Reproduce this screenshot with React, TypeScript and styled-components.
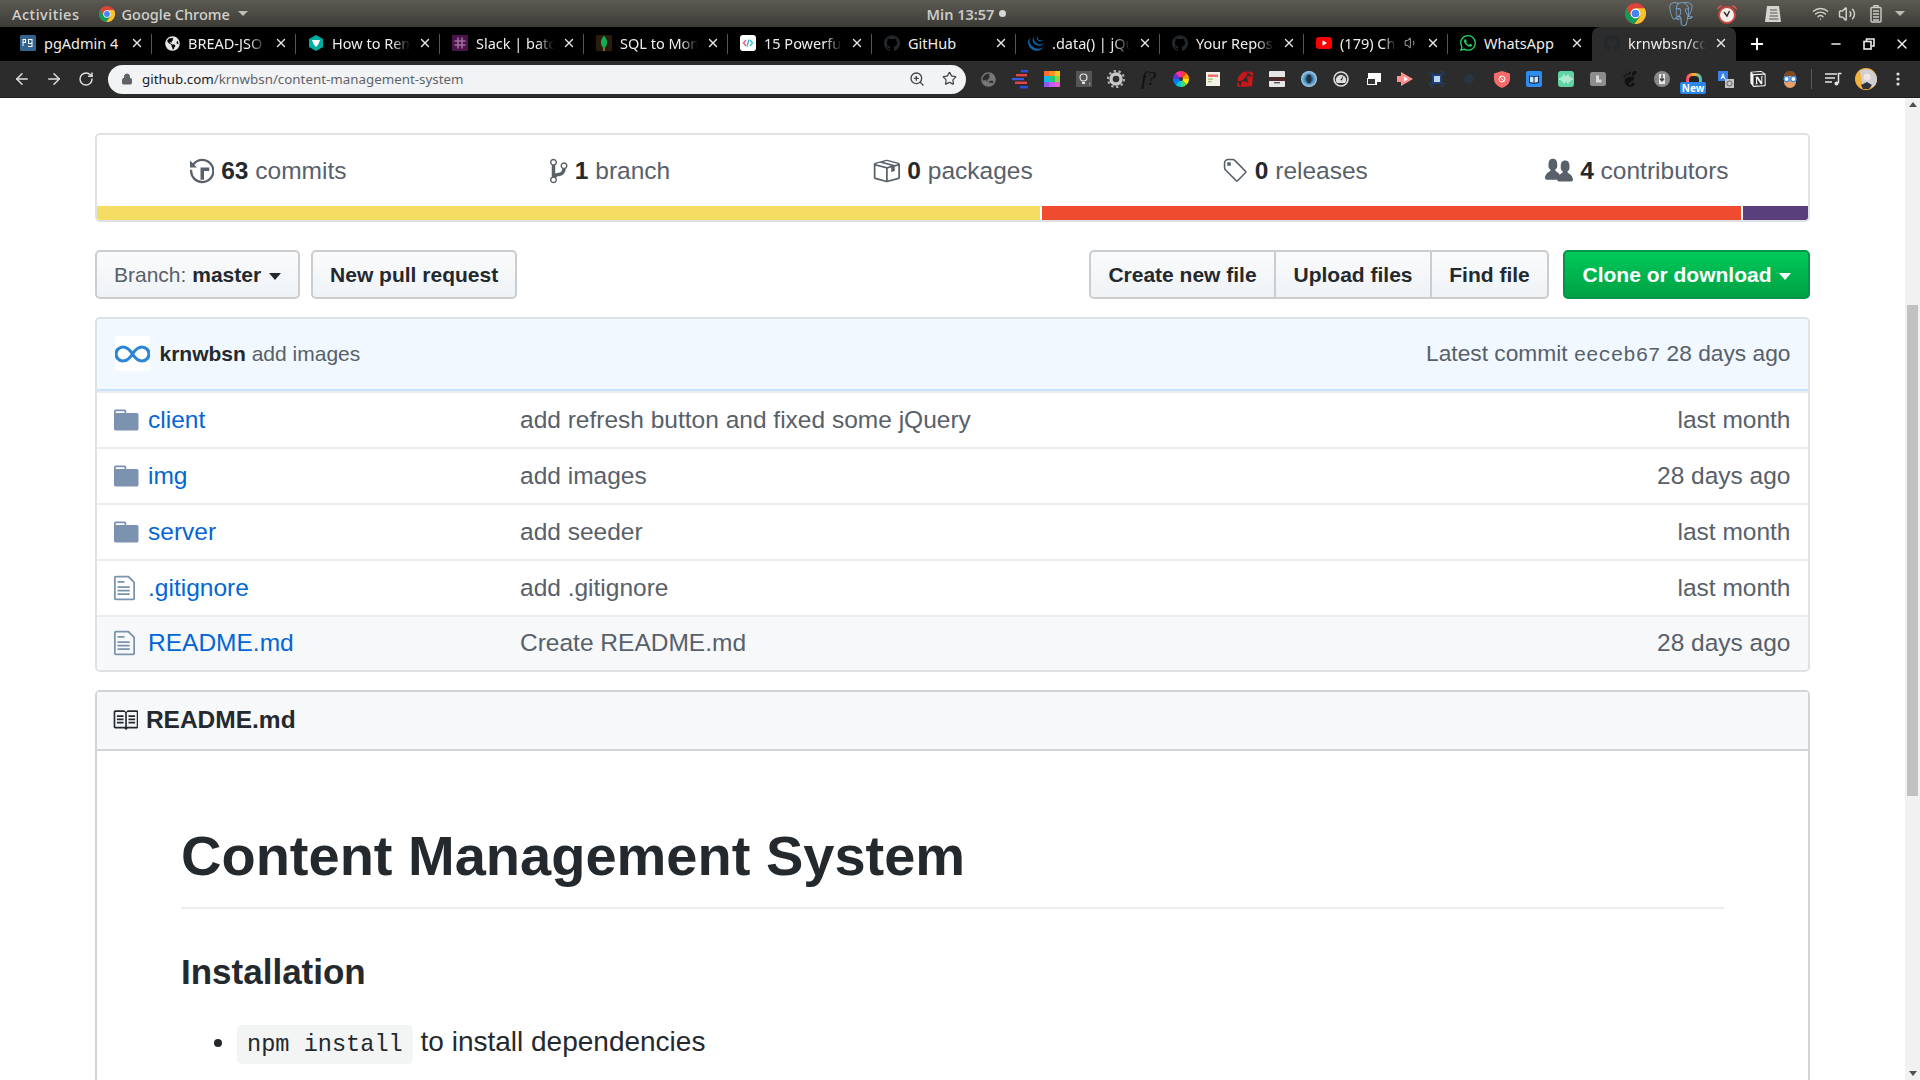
import React from "react";
import styled, { createGlobalStyle } from "styled-components";
import { ArrowLeft, ArrowRight, RotateCw, Lock, ZoomIn, Star, Plus, X, Minus, Wifi, Volume2, Volume1 } from "lucide-react";
import { SiGithub, SiWhatsapp, SiJquery, SiRuby, SiGnome, SiNotion, SiPostgresql } from "react-icons/si";
import { FaGlobeAmericas, FaGlobeAsia } from "react-icons/fa";

const Global = createGlobalStyle`
  html, body { margin: 0; padding: 0; height: 1080px; overflow: hidden; background: #fff; }
  * { box-sizing: border-box; }
`;

const Page = styled.div`
  width: 1920px; height: 1080px; display: flex; flex-direction: column; overflow: hidden;
  font-family: "Liberation Sans", Arial, sans-serif;
`;

/* ---------- GNOME top bar ---------- */
const TopBar = styled.header`
  height: 27px; flex: none; display: grid; grid-template-columns: 1fr auto 1fr; align-items: center;
  background: linear-gradient(#5c5a52, #3c3b37);
  color: #d3d2cd; font: 500 14.5px "Noto Sans", sans-serif; padding: 0 11px 0 12px;
`;
const BarLeft = styled.div`display: flex; align-items: center; gap: 20px;`;
const ActivitiesLabel = styled.span`letter-spacing: 0.5px;`;
const AppMenu = styled.div`display: flex; align-items: center; gap: 6px;`;
const Caret = styled.span<{ $c?: string }>`
  width: 0; height: 0; border-left: 5px solid transparent; border-right: 5px solid transparent;
  border-top: 5px solid ${(p) => p.$c || "#bdbcb7"}; margin-left: 2px;
`;
const Clock = styled.div`display: flex; align-items: center; gap: 5px; font-weight: 600; color: #c9c9c5; margin-left: 12px;`;
const Dot = styled.span`width: 7px; height: 7px; border-radius: 50%; background: #d6d6d2;`;
const BarRight = styled.div`display: flex; align-items: center; justify-content: flex-end;`;
const SystemTray = styled.div`display: flex; align-items: center; margin-left: 13px;`;
const Tray = styled.span<{ $w: number }>`
  width: ${(p) => p.$w}px; display: flex; justify-content: center; align-items: center; color: #cfcfca;
`;

/* ---------- Tab strip ---------- */
const TabStrip = styled.nav`
  height: 34px; flex: none; background: #000; display: flex; padding-left: 8px; color: #eee;
  font: 14.5px "Noto Sans", sans-serif;
`;
const Tab = styled.div<{ $active?: boolean; $sep?: boolean }>`
  position: relative; width: 144px; flex: none; display: flex; align-items: center; padding: 0 8px 2px 12px; gap: 8px;
  border-radius: 8px 8px 0 0;
  background: ${(p) => (p.$active ? "#2c2c2c" : "transparent")};
  &::after {
    content: ""; position: absolute; right: 0; top: 7px; bottom: 7px; width: 1px;
    background: ${(p) => (p.$sep ? "#555" : "transparent")};
  }
`;
const Fav = styled.span`width: 16px; height: 16px; flex: none; display: flex; align-items: center; justify-content: center;`;
const TabTitle = styled.span<{ $fade?: boolean }>`
  flex: 1; min-width: 0; white-space: nowrap;
  ${(p) => (p.$fade ? "-webkit-mask-image: linear-gradient(90deg,#000 78%,transparent 100%); mask-image: linear-gradient(90deg,#000 78%,transparent 100%);" : "")}
`;
const TabClose = styled.span`flex: none; display: flex; color: #e8e8e8;`;
const NewTab = styled.span`width: 42px; display: flex; align-items: center; justify-content: center; color: #fff;`;
const WinControls = styled.div`margin-left: auto; display: flex; align-items: center; padding-right: 2px; color: #eee;`;
const WinBtn = styled.span`width: 33px; display: flex; justify-content: center;`;

/* ---------- Toolbar ---------- */
const Toolbar = styled.div`
  height: 37px; flex: none; background: #2c2c2c; display: flex; align-items: center; padding-left: 6px;
  border-bottom: 1px solid #1f1f1f; color: #dedede;
`;
const NavBtn = styled.span`width: 32px; display: flex; justify-content: center;`;
const Omnibox = styled.div`
  width: 858px; height: 29px; margin-left: 6px; border-radius: 15px; background: #f1f3f4; display: flex; align-items: center;
  padding: 0 1px 1px 13px; color: #5f6368; font: 13.35px "Noto Sans", sans-serif;
`;
const Url = styled.span`margin-left: 9px; flex: 1; white-space: nowrap;`;
const Host = styled.span`color: #202124;`;
const OmniIcon = styled.span`width: 32px; display: flex; justify-content: center; color: #444;`;
const Exts = styled.div`display: flex; align-items: center; margin-left: 6px;`;
const Ext = styled.span`
  position: relative; width: 32.1px; height: 30px; display: flex; align-items: center; justify-content: center;
`;
const FQ = styled.span`font: italic 19px "Liberation Serif", serif; color: #0c0c0c;`;
const NewBadge = styled.span`
  position: absolute; left: 2px; bottom: 0; width: 26px; height: 12px; border-radius: 2px; background: #2b86e6; color: #fff;
  font: 700 10px/12px "Noto Sans", sans-serif; text-align: center;
`;
const ToolDivider = styled.span`width: 1px; height: 20px; background: #5a5a5a; margin: 0 5px;`;

/* ---------- Page ---------- */
const Viewport = styled.div`flex: 1; min-height: 0; display: flex;`;
const Main = styled.main`flex: 1; min-width: 0; overflow: hidden; background: #fff; color: #24292e;`;
const Container = styled.div`width: 1715px; margin: 0 auto; padding-top: 35px;`;

const Summary = styled.section`
  height: 89px; border: 2px solid #dfe2e5; border-radius: 5px; display: flex; flex-direction: column; overflow: hidden;
`;
const Stats = styled.div`flex: 1; display: grid; grid-template-columns: repeat(5, 1fr); align-items: center;`;
const Stat = styled.div`
  display: flex; justify-content: center; align-items: center; gap: 7px; font-size: 24.5px; color: #586069;
  b { color: #24292e; font-weight: 700; }
`;
const LangBar = styled.div`height: 14px; flex: none; display: flex; gap: 2px;`;
const Lang = styled.span<{ $grow: number; $c: string }>`flex: ${(p) => p.$grow} 0 0; background: ${(p) => p.$c};`;

const Actions = styled.div`margin: 28px 0 18px; display: flex; align-items: stretch; height: 49px;`;
const Btn = styled.button`
  height: 49px; padding: 0 17px; border: 2px solid #cbcdcf; border-radius: 5px; font: 700 21px "Liberation Sans", sans-serif;
  color: #24292e; background: linear-gradient(#fafbfc, #eff3f6); display: inline-flex; align-items: center;
`;
const BranchBtn = styled(Btn)`
  font-weight: 400; color: #586069; gap: 6px; margin-right: 11px;
  b { color: #24292e; }
`;
const BtnCaret = styled.span<{ $c: string }>`
  width: 0; height: 0; border-left: 6px solid transparent; border-right: 6px solid transparent; border-top: 7px solid ${(p) => p.$c}; margin-left: 2px; margin-top: 3px;
`;
const Spacer = styled.span`flex: 1;`;
const BtnGroup = styled.div`display: flex; margin-right: 14px;`;
const GroupBtn = styled(Btn)<{ $w: number }>`
  width: ${(p) => p.$w}px; padding: 0; justify-content: center; border-radius: 0; margin-left: -2px;
  &:first-child { border-radius: 5px 0 0 5px; margin-left: 0; }
  &:last-child { border-radius: 0 5px 5px 0; }
`;
const CloneBtn = styled(Btn)`
  width: 247px; padding: 0; justify-content: center; gap: 5px; color: #fff; border-color: #04934a; background: linear-gradient(#00ca5a, #00a143);
`;

const Files = styled.section`border: 2px solid #dfe2e5; border-radius: 5px; overflow: hidden;`;
const CommitBar = styled.div`
  height: 74px; margin: -2px -2px 0; border: 2px solid #c8e1ff; background: #f1f8ff; border-radius: 5px 5px 0 0; padding: 0 17.5px 1px;
  display: flex; align-items: center; font-size: 21px; color: #586069; gap: 10px;
`;
const Avatar = styled.span`width: 35px; height: 35px; background: #fff; border-radius: 3px; display: flex; align-items: center; justify-content: center;`;
const Author = styled.b`color: #24292e;`;
const Latest = styled.span`margin-left: auto; display: flex; gap: 6px; align-items: baseline; font-size: 22.75px;`;
const Sha = styled.span`font: 20.7px "Liberation Mono", monospace;`;

const Row = styled.div<{ $hover?: boolean }>`
  height: 56px; padding: 0 17.5px 1px 17px; display: flex; align-items: center; font-size: 24.5px; color: #586069;
  border-top: 2px solid #eaecef; background: ${(p) => (p.$hover ? "#f6f8fa" : "#fff")};
  &:first-of-type { border-top: 0; height: 55px; }
  &:last-of-type { height: 55px; }
`;
const RowIcon = styled.span`width: 34px; flex: none; display: flex; color: #7b93ae;`;
const Name = styled.a`width: 372px; flex: none; color: #0366d6;`;
const Message = styled.span`flex: 1;`;

const Readme = styled.section`
  margin-top: 18px; border: 2px solid #d1d5da; border-bottom: 0; border-radius: 5px 5px 0 0; height: 500px;
`;
const ReadmeHead = styled.div`
  height: 59px; padding: 0 14.5px 1px; background: #f6f8fa; border-bottom: 2px solid #d1d5da; display: flex; align-items: center; gap: 8px;
  font-weight: 700; font-size: 24.5px; color: #24292e;
`;
const Article = styled.article`padding: 70px 84px 0;`;
const H1 = styled.h1`
  margin: 0 0 41px; padding-bottom: 16px; border-bottom: 2px solid #eaecef; font-size: 56px; line-height: 70px; font-weight: 700;
`;
const H3 = styled.h3`margin: 0 0 27px; font-size: 35px; line-height: 44px; font-weight: 700;`;
const Ul = styled.ul`margin: 0; padding-left: 56px; font-size: 28px; line-height: 42px; color: #24292e;`;
const Code = styled.code`
  font: 23.6px "Liberation Mono", monospace; padding: 6px 10px; border-radius: 5px; background: #f3f4f4;
`;

/* ---------- Scrollbar ---------- */
const Scroll = styled.aside`
  width: 15px; flex: none; background: #f1f1f1; display: flex; flex-direction: column; align-items: center; padding-top: 4px;
`;
const Up = styled.span`width: 0; height: 0; border: 4px solid transparent; border-top: 0; border-bottom: 5px solid #505050;`;
const Thumb = styled.span`width: 11px; height: 491px; background: #c1c1c1; margin-top: 198px;`;
const Down = styled.span`width: 0; height: 0; border: 4px solid transparent; border-bottom: 0; border-top: 5px solid #505050; margin-top: auto; margin-bottom: 4px;`;

/* ---------- Icons ---------- */
const Oct = ({ w, d, s = 1.75, c = "currentColor" }: { w: number; d: string; s?: number; c?: string }) => (
  <svg width={w * s} height={16 * s} viewBox={`0 0 ${w} 16`} fill={c}><path fillRule="evenodd" d={d} /></svg>
);
const HISTORY = "M8 13H6V6h5v2H8v5zM7 1C4.81 1 2.87 2.02 1.59 3.59L0 2v4h4L2.5 4.5C3.55 3.17 5.17 2.3 7 2.3c3.14 0 5.7 2.56 5.7 5.7s-2.56 5.7-5.7 5.7A5.71 5.71 0 011.28 8c0-.24.02-.48.05-.7H.05C.02 7.53 0 7.77 0 8c0 3.86 3.14 7 7 7s7-3.14 7-7-3.14-7-7-7z";
const BRANCH = "M10 5c0-1.11-.89-2-2-2a1.993 1.993 0 00-1 3.72v.3c-.02.52-.23.98-.63 1.38-.4.4-.86.61-1.38.63-.83.02-1.48.16-2 .45V4.72a1.993 1.993 0 00-1-3.72C.88 1 0 1.89 0 3a2 2 0 001 1.72v6.56c-.59.35-1 .99-1 1.72 0 1.11.89 2 2 2 1.11 0 2-.89 2-2 0-.53-.2-1-.53-1.36.09-.06.48-.41.59-.47.25-.11.56-.17.94-.17 1.05-.05 1.95-.45 2.75-1.25S8.95 7.77 9 6.73h-.02C9.59 6.37 10 5.73 10 5zM2 1.8c.66 0 1.2.55 1.2 1.2 0 .65-.55 1.2-1.2 1.2C1.35 4.2.8 3.65.8 3c0-.65.55-1.2 1.2-1.2zm0 12.41c-.66 0-1.2-.55-1.2-1.2 0-.65.55-1.2 1.2-1.2.65 0 1.2.55 1.2 1.2 0 .65-.55 1.2-1.2 1.2zm6-8c-.66 0-1.2-.55-1.2-1.2 0-.65.55-1.2 1.2-1.2.65 0 1.2.55 1.2 1.2 0 .65-.55 1.2-1.2 1.2z";
const PACKAGE = "M1 4.27v7.47c0 .45.3.84.75.97l6.5 1.73c.16.05.34.05.5 0l6.5-1.73c.45-.13.75-.52.75-.97V4.27c0-.45-.3-.84-.75-.97l-6.5-1.74a1.4 1.4 0 00-.5 0L1.75 3.3c-.45.13-.75.52-.75.97zm7 9.09l-6-1.59V5l6 1.61v6.75zM2 4l2.5-.67L11 5.06l-2.5.67L2 4zm13 7.77l-6 1.59V6.61l2-.55V8.5l2-.53V5.53L15 5v6.77zm-2-7.24L6.5 2.8l2-.53L15 4l-2 .53z";
const TAG = "M7.73 1.73C7.26 1.26 6.62 1 5.96 1H3.5C2.13 1 1 2.13 1 3.5v2.47c0 .66.27 1.3.73 1.77l6.06 6.06c.39.39 1.02.39 1.41 0l4.59-4.59a.996.996 0 000-1.41L7.73 1.73zM2.38 7.09c-.31-.3-.47-.7-.47-1.13V3.5c0-.88.72-1.59 1.59-1.59h2.47c.42 0 .83.16 1.13.47l6.14 6.13-4.73 4.73-6.13-6.15zM3.01 3h2v2H3V3h.01z";
const ORG = "M16 12.999c0 .439-.45 1-1 1H7.995c-.539 0-.994-.447-.995-.999H1c-.54 0-1-.561-1-1 0-2.634 3-4 3-4s.229-.409 0-1c-.841-.621-1.058-.59-1-3 .058-2.419 1.367-3 2.5-3s2.442.58 2.5 3c.058 2.41-.159 2.379-1 3-.229.59 0 1 0 1s1.549.711 2.42 2.088C9.196 9.369 10 8.999 10 8.999s.229-.409 0-1c-.841-.62-1.058-.59-1-3 .058-2.419 1.367-3 2.5-3s2.437.581 2.495 3c.059 2.41-.158 2.38-1 3-.229.59 0 1 0 1s3.005 1.366 3.005 4z";
const DIR = "M13 4H7V3c0-.66-.31-1-1-1H1c-.55 0-1 .45-1 1v10c0 .55.45 1 1 1h12c.55 0 1-.45 1-1V5c0-.55-.45-1-1-1zM6 4H1V3h5v1z";
const FILE = "M6 5H2V4h4v1zM2 8h7V7H2v1zm0 2h7V9H2v1zm0 2h7v-1H2v1zm10-7.5V14c0 .55-.45 1-1 1H1c-.55 0-1-.45-1-1V2c0-.55.45-1 1-1h7.5L12 4.5zM11 5L8 2H1v12h10V5z";
const BOOK = "M3 5h4v1H3V5zm0 3h4V7H3v1zm0 2h4V9H3v1zm11-5h-4v1h4V5zm0 2h-4v1h4V7zm0 2h-4v1h4V9zm2-6v9c0 .55-.45 1-1 1H9.5l-1 1-1-1H2c-.55 0-1-.45-1-1V3c0-.55.45-1 1-1h5.5l1 1 1-1H15c.55 0 1 .45 1 1zm-8 .5L7.5 3H2v9h6V3.5zm7-.5H9.5l-.5.5V12h6V3z";

const ChromeLogo = ({ s }: { s: number }) => (
  <svg width={s} height={s} viewBox="0 0 24 24">
    <circle cx="12" cy="12" r="12" fill="#db4437" />
    <path d="M22.39 6A12 12 0 0 1 10.5 23.9L17.2 15 12 6Z" fill="#fbc02d" />
    <path d="M10.5 23.9A12 12 0 0 1 1.61 6L6.8 15h10.4Z" fill="#0f9d58" />
    <circle cx="12" cy="12" r="5.6" fill="#fff" />
    <circle cx="12" cy="12" r="4.4" fill="#4285f4" />
  </svg>
);
const Pg = () => (
  <svg width="16" height="16" viewBox="0 0 16 16"><rect width="16" height="16" rx="1.5" fill="#326690" /><path d="M2.5 4h3.5v4H3.5v3h-1zM3.5 5v2H5V5zM8 4h4.5v8H8v-1h3.5V9H8zM9 5v3h2.5V5z" fill="#fff" /></svg>
);
const HexTeal = () => (
  <svg width="16" height="16" viewBox="0 0 16 16"><path d="M8 0l7 4v8l-7 4-7-4V4z" fill="#00ad9f" /><path d="M4 5h8l-1.5 4L8 12 5.5 9z" fill="#fff" /></svg>
);
const Slack = () => (
  <svg width="16" height="16" viewBox="0 0 16 16"><rect width="16" height="16" fill="#4a154b" /><path d="M6 2.5v11M10 2.5v11M2.5 6h11M2.5 10h11" stroke="#9d6d9f" strokeWidth="1.6" /></svg>
);
const Mongo = () => (
  <svg width="16" height="16" viewBox="0 0 16 16"><rect width="16" height="16" fill="#2a1c0d" /><path d="M8 .5c2.6 3 3.4 5.5 3 8-.4 2.4-1.8 4-3 5-1.2-1-2.6-2.600-3-5-.4-2.500.4-5 3-8z" fill="#13aa52" /><path d="M8 13v3" stroke="#c8b78a" /></svg>
);
const Code15 = () => (
  <svg width="16" height="16" viewBox="0 0 16 16"><rect width="16" height="16" rx="3" fill="#fff" /><path d="M6 5L3.5 8 6 11" stroke="#f0588a" fill="none" strokeWidth="1.4" /><path d="M10 5l2.5 3-2.5 3" stroke="#37c6c0" fill="none" strokeWidth="1.4" /><path d="M9 4.5L7 11.5" stroke="#3498db" strokeWidth="1.1" /></svg>
);
const Youtube = () => (
  <svg width="16" height="16" viewBox="0 0 16 16"><rect y="2" width="16" height="12" rx="3" fill="#f00" /><path d="M6.5 5.3L11 8l-4.5 2.7z" fill="#fff" /></svg>
);

const Bars = () => (
  <svg width="18" height="20" viewBox="0 0 18 20"><rect x="10" y="1" width="7" height="2.4" fill="#2c4fe0" /><rect x="5" y="5" width="11" height="2.4" fill="#e8434a" /><rect x="1" y="9" width="12" height="2.2" fill="#3a5be0" /><rect x="4" y="12.6" width="12" height="2.4" fill="#e8434a" /><rect x="9" y="17" width="8" height="2.4" fill="#2c4fe0" /></svg>
);
const Palette = () => (
  <svg width="16" height="16" viewBox="0 0 3 3" shapeRendering="crispEdges">
    {["#ff6b2c", "#ff9224", "#ffc61c", "#12b8f0", "#22cc66", "#8fd14f", "#9255f0", "#c45cf0", "#f05cd0"].map((c, i) => (
      <rect key={c} x={i % 3} y={Math.floor(i / 3)} width="1" height="1" fill={c} />
    ))}
  </svg>
);
const Bulb = () => (
  <svg width="16" height="16" viewBox="0 0 16 16"><rect width="16" height="16" rx="1" fill="#555" /><circle cx="7.5" cy="6.5" r="3.5" fill="none" stroke="#e8e8e8" strokeWidth="1.2" /><path d="M6 11h3v2H6z" fill="#e8e8e8" /><path d="M13 11l2 2-2 2z" fill="#888" /></svg>
);
const Gear = () => (
  <svg width="18" height="18" viewBox="0 0 18 18"><circle cx="9" cy="9" r="5" fill="none" stroke="#c8c8c8" strokeWidth="3.4" /><circle cx="9" cy="9" r="8" fill="none" stroke="#b0b0b0" strokeWidth="2.2" strokeDasharray="2.4 2.6" /></svg>
);
const Wheel = () => (
  <svg width="16" height="16" viewBox="0 0 16 16">
    {["#ff3b30", "#ff9500", "#ffee00", "#4cd964", "#00c7d9", "#007aff", "#5f36d6", "#ff2fa8"].map((c, i) => (
      <path key={c} d="M8 8L8 0A8 8 0 0 1 13.66 2.34Z" fill={c} transform={`rotate(${i * 45} 8 8)`} />
    ))}
    <circle cx="8" cy="8" r="2" fill="#333" />
  </svg>
);
const Note = () => (
  <svg width="14" height="14" viewBox="0 0 14 14"><rect width="14" height="14" fill="#f4f0e6" /><rect x="2" y="2.5" width="10" height="2.4" fill="#f06a6a" /><rect x="2" y="6.5" width="5" height="1.2" fill="#8fc46a" /><rect x="2" y="9" width="3.4" height="1.2" fill="#8fc46a" /></svg>
);
const Mask = () => (
  <svg width="16" height="16" viewBox="0 0 16 16"><rect y="0" width="16" height="16" rx="1" fill="#e6e6e6" /><rect y="6" width="16" height="4" fill="#4a2a2a" /><rect x="5" y="11" width="6" height="1.4" fill="#555" /></svg>
);
const Orb = () => (
  <svg width="16" height="16" viewBox="0 0 16 16"><defs><radialGradient id="orb"><stop offset="0.3" stopColor="#0f5f9c" /><stop offset="1" stopColor="#a9d4ee" /></radialGradient></defs><circle cx="8" cy="8" r="8" fill="url(#orb)" /><ellipse cx="8" cy="8" rx="2.4" ry="4.4" fill="#28323c" /></svg>
);
const Gauge = () => (
  <svg width="16" height="16" viewBox="0 0 16 16"><circle cx="8" cy="8" r="7" fill="#333" stroke="#ddd" strokeWidth="1.6" /><path d="M4 12A5 5 0 1 1 12 12Z" fill="#ddd" /><path d="M7.4 9l3-4.6L9 9.6z" fill="#222" /></svg>
);
const Devices = () => (
  <svg width="16" height="14" viewBox="0 0 16 14"><path d="M3 1h13v9h-4v3H2V6h1z" fill="#fff" /><path d="M3 7h7v5H3z" fill="#333" /></svg>
);
const RedPlay = () => (
  <svg width="16" height="14" viewBox="0 0 16 14"><path d="M4 0l12 7-12 7z" fill="#ff8f8f" /><rect x="0" y="4" width="10" height="6" fill="#ff8f8f" /><path d="M7 4.5L11 7 7 9.5z" fill="#fff" /></svg>
);
const Square = () => (
  <svg width="16" height="16" viewBox="0 0 16 16"><rect x="3" y="3" width="10" height="10" fill="#1d3f7c" /><rect x="5" y="5" width="6" height="6" fill="#b7d5f5" /><path d="M0 3h2M14 3h2M0 13h2M14 13h2M3 0v2M13 0v2M3 14v2M13 14v2" stroke="#1d4fa0" strokeWidth="1" /></svg>
);
const Shield = () => (
  <svg width="16" height="17" viewBox="0 0 16 17"><path d="M8 0l8 2.6V8c0 4.4-3.4 7.4-8 9-4.6-1.6-8-4.6-8-9V2.6z" fill="#f96a6a" /><circle cx="8" cy="8" r="3" fill="none" stroke="#fff" strokeWidth="1" /><path d="M6 6l4 4" stroke="#fff" strokeWidth="1" /></svg>
);
const BlueBook = () => (
  <svg width="16" height="16" viewBox="0 0 16 16"><rect width="16" height="16" rx="2" fill="#2d8cf0" /><path d="M3 4.5l5 1 5-1V12l-5 1-5-1z" fill="#0d2e52" /><path d="M4 5.5l3.5.8v5.5L4 11zM12 5.5l-3.5.8v5.5L12 11z" fill="#cfe4fa" /></svg>
);
const Wave = () => (
  <svg width="16" height="16" viewBox="0 0 16 16"><rect width="16" height="16" rx="3" fill="#5fd3a0" /><path d="M2 7v2M4 5.5v5M6 3.5v9M8 5v6M10 3.5v9M12 5.5v5M14 7v2" stroke="#fff" strokeWidth="1" /></svg>
);
const GreyBox = () => (
  <svg width="16" height="14" viewBox="0 0 16 14"><rect width="16" height="14" rx="2.5" fill="#8d8d8d" /><path d="M6 3.5h3v4h2.5v3H6z" fill="#d8d8d8" /></svg>
);
const Pocket = () => (
  <svg width="16" height="16" viewBox="0 0 16 16"><circle cx="8" cy="8" r="8" fill="#8a8a8a" /><path d="M5 3h6v10H5z" fill="#e8e8e8" /><path d="M8 3.5v6M6 7.5l2 2.4 2-2.4" stroke="#444" strokeWidth="1.3" fill="none" /><path d="M0 8h3M13 8h3" stroke="#777" /></svg>
);
const Rainbow = () => (
  <svg width="16" height="12" viewBox="0 0 16 12"><defs><linearGradient id="rb" x1="0" x2="1"><stop stopColor="#ff3d7f" /><stop offset=".5" stopColor="#ffb020" /><stop offset="1" stopColor="#28c0f0" /></linearGradient></defs><path d="M0 12V6a6 6 0 0 1 6-6h4a6 6 0 0 1 6 6v6z" fill="url(#rb)" /><path d="M3 12V7a4 4 0 0 1 4-4h2a4 4 0 0 1 4 4v5z" fill="#222" /></svg>
);
const Translate = () => (
  <svg width="16" height="17" viewBox="0 0 16 17"><rect width="10" height="10" fill="#3b82e8" /><path d="M5 2L2.6 8h1.2l.4-1.2h1.6L6.2 8h1.2zM4.5 5.8L5 4.2l.5 1.6z" fill="#fff" /><rect x="7" y="8" width="9" height="9" fill="#c4c4c4" /><circle cx="11.5" cy="12.5" r="2.6" fill="none" stroke="#666" /></svg>
);
const Nerd = () => (
  <svg width="16" height="17" viewBox="0 0 16 17"><path d="M8 0c4 0 6 2 6 5H2c0-3 2-5 6-5z" fill="#7d4a21" /><path d="M2 5h12v6c0 3-3 6-6 6s-6-3-6-6z" fill="#e8a06a" /><circle cx="4.6" cy="8" r="2.6" fill="#fff" stroke="#2d8cf0" strokeWidth="1.3" /><circle cx="11.4" cy="8" r="2.6" fill="#fff" stroke="#2d8cf0" strokeWidth="1.3" /></svg>
);
const MediaIcon = () => (
  <svg width="17" height="14" viewBox="0 0 17 14" fill="none" stroke="#e4e4e4" strokeWidth="1.5"><path d="M0 2h12M0 6h10M0 10h7" /><path d="M13.5 1v10" /><path d="M13.5 1.2c1 .3 2 .4 3 .3" /><circle cx="11.5" cy="11.5" r="2" fill="#e4e4e4" stroke="none" /></svg>
);
const ProfilePic = () => (
  <svg width="22" height="22" viewBox="0 0 22 22"><circle cx="11" cy="11" r="11" fill="#f3b23c" /><path d="M5 3a11 11 0 0 1 17 8c0 4-2 7-4 8H8z" fill="#cfd0d6" /><circle cx="12" cy="9" r="3.4" fill="#f2e6e0" /><path d="M6 17l6-3 5 3-3 4H8z" fill="#2c3240" /></svg>
);
const Kebab = () => (
  <svg width="4" height="14" viewBox="0 0 4 14" fill="#e0e0e0"><circle cx="2" cy="2" r="1.6" /><circle cx="2" cy="7" r="1.6" /><circle cx="2" cy="12" r="1.6" /></svg>
);
const Battery = () => (
  <svg width="12" height="18" viewBox="0 0 12 18" fill="none" stroke="#cfcfca" strokeWidth="1.4"><path d="M4 2V.8h4V2" /><rect x="1" y="2.5" width="10" height="14.5" rx="1" /><path d="M3 6h6M3 9h6M3 12h6M3 15h6" strokeWidth="1.6" /></svg>
);
const ListIcon = () => (
  <svg width="16" height="16" viewBox="0 0 16 16"><path d="M2 0h12l2 16H0z" fill="#d6d5d0" /><path d="M5 4h7M5 7h7.5M4.5 10h8.5M4 13h9.5" stroke="#55534d" strokeWidth="1" /></svg>
);
const Alarm = () => (
  <svg width="22" height="22" viewBox="0 0 22 22"><path d="M1 7a4.5 4.5 0 0 1 6-4.5zM21 7a4.5 4.5 0 0 0-6-4.5z" fill="#d9534f" /><circle cx="11" cy="12" r="8" fill="#f4efe8" stroke="#c9453f" strokeWidth="2" /><path d="M8 9l3 4 2.5-5" stroke="#333" strokeWidth="1.5" fill="none" /></svg>
);
const Restore = () => (
  <svg width="12" height="12" viewBox="0 0 12 12" fill="none" stroke="#eee" strokeWidth="1.6"><rect x="1" y="3.5" width="7" height="7.5" /><path d="M3.5 3V1H11v7H8.5" /></svg>
);

const G = ({ size = 16 }: { size?: number }) => <SiGithub size={size} color="#23282d" />;

const tabs: { title: string; icon: React.ReactNode; fade?: boolean; sep?: boolean; audio?: boolean; active?: boolean }[] = [
  { title: "pgAdmin 4", icon: <Pg />, sep: true },
  { title: "BREAD-JSO", icon: <FaGlobeAmericas size={15} color="#e8e8e8" />, fade: true, sep: true },
  { title: "How to Rem", icon: <HexTeal />, fade: true, sep: true },
  { title: "Slack | batc", icon: <Slack />, fade: true, sep: true },
  { title: "SQL to Mon", icon: <Mongo />, fade: true, sep: true },
  { title: "15 Powerful", icon: <Code15 />, fade: true, sep: true },
  { title: "GitHub", icon: <G />, sep: true },
  { title: ".data() | jQu", icon: <SiJquery size={16} color="#0769ad" />, fade: true, sep: true },
  { title: "Your Reposi", icon: <G />, fade: true, sep: true },
  { title: "(179) Chi", icon: <Youtube />, fade: true, sep: true, audio: true },
  { title: "WhatsApp", icon: <SiWhatsapp size={16} color="#25d366" /> },
  { title: "krnwbsn/co", icon: <G />, fade: true, active: true },
];

const exts: React.ReactNode[] = [
  <FaGlobeAsia key="a" size={15} color="#777" />, <Bars key="b" />, <Palette key="c" />, <Bulb key="d" />, <Gear key="e" />, <FQ key="f">f?</FQ>,
  <Wheel key="g" />, <Note key="h" />, <SiRuby key="i" size={16} color="#c8171a" />, <Mask key="j" />, <Orb key="k" />, <Gauge key="l" />,
  <Devices key="m" />, <RedPlay key="n" />, <Square key="o" />, <svg key="p" width="12" height="12" viewBox="0 0 12 12"><circle cx="6" cy="6" r="5" fill="#263544" /></svg>,
  <Shield key="q" />, <BlueBook key="r" />, <Wave key="s" />, <GreyBox key="t" />, <SiGnome key="u" size={16} color="#111" />, <Pocket key="v" />,
  <React.Fragment key="w"><Rainbow /><NewBadge>New</NewBadge></React.Fragment>, <Translate key="x" />, <SiNotion key="y" size={16} color="#f2f2f2" />, <Nerd key="z" />,
];

const stats = [
  { icon: <Oct w={14} d={HISTORY} />, n: "63", label: "commits" },
  { icon: <Oct w={10} d={BRANCH} />, n: "1", label: "branch" },
  { icon: <Oct w={16} d={PACKAGE} />, n: "0", label: "packages" },
  { icon: <Oct w={15} d={TAG} />, n: "0", label: "releases" },
  { icon: <Oct w={16} d={ORG} />, n: "4", label: "contributors" },
];

const files = [
  { dir: true, name: "client", msg: "add refresh button and fixed some jQuery", age: "last month" },
  { dir: true, name: "img", msg: "add images", age: "28 days ago" },
  { dir: true, name: "server", msg: "add seeder", age: "last month" },
  { dir: false, name: ".gitignore", msg: "add .gitignore", age: "last month" },
  { dir: false, name: "README.md", msg: "Create README.md", age: "28 days ago", hover: true },
];

export default function App() {
  return (
    <Page>
      <Global />
      <TopBar>
        <BarLeft>
          <ActivitiesLabel>Activities</ActivitiesLabel>
          <AppMenu><ChromeLogo s={16} /><span>Google Chrome</span><Caret /></AppMenu>
        </BarLeft>
        <Clock>Min 13:57<Dot /></Clock>
        <BarRight>
          <Tray $w={46}><ChromeLogo s={21} /></Tray>
          <Tray $w={46}><SiPostgresql size={24} color="#7fb0dc" /></Tray>
          <Tray $w={46}><Alarm /></Tray>
          <Tray $w={46}><ListIcon /></Tray>
          <SystemTray>
            <Tray $w={22}><Wifi size={17} /></Tray>
            <Tray $w={32}><Volume2 size={18} /></Tray>
            <Tray $w={26}><Battery /></Tray>
            <Tray $w={20}><Caret /></Tray>
          </SystemTray>
        </BarRight>
      </TopBar>

      <TabStrip>
        {tabs.map((t) => (
          <Tab key={t.title} $active={t.active} $sep={t.sep}>
            <Fav>{t.icon}</Fav>
            <TabTitle $fade={t.fade}>{t.title}</TabTitle>
            {t.audio && <Volume1 size={14} color="#888" />}
            <TabClose><X size={14} strokeWidth={2.4} /></TabClose>
          </Tab>
        ))}
        <NewTab><Plus size={18} strokeWidth={2.6} /></NewTab>
        <WinControls>
          <WinBtn><Minus size={14} strokeWidth={2.4} /></WinBtn>
          <WinBtn><Restore /></WinBtn>
          <WinBtn><X size={16} strokeWidth={2.2} /></WinBtn>
        </WinControls>
      </TabStrip>

      <Toolbar>
        <NavBtn><ArrowLeft size={18} /></NavBtn>
        <NavBtn><ArrowRight size={18} /></NavBtn>
        <NavBtn><RotateCw size={16} strokeWidth={2.2} /></NavBtn>
        <Omnibox>
          <Lock size={12} fill="#5f6368" />
          <Url><Host>github.com</Host>/krnwbsn/content-management-system</Url>
          <OmniIcon><ZoomIn size={16} /></OmniIcon>
          <OmniIcon><Star size={15} /></OmniIcon>
        </Omnibox>
        <Exts>
          {exts.map((e, i) => <Ext key={i}>{e}</Ext>)}
          <ToolDivider />
          <Ext><MediaIcon /></Ext>
          <Ext><ProfilePic /></Ext>
          <Ext><Kebab /></Ext>
        </Exts>
      </Toolbar>

      <Viewport>
        <Main>
          <Container>
            <Summary>
              <Stats>
                {stats.map((s) => (
                  <Stat key={s.label}>{s.icon}<span><b>{s.n}</b> {s.label}</span></Stat>
                ))}
              </Stats>
              <LangBar>
                <Lang $grow={943.5} $c="#f5dc62" />
                <Lang $grow={699.5} $c="#ef4b2f" />
                <Lang $grow={65} $c="#5a3f7d" />
              </LangBar>
            </Summary>

            <Actions>
              <BranchBtn><span>Branch: <b>master</b></span><BtnCaret $c="#24292e" /></BranchBtn>
              <Btn>New pull request</Btn>
              <Spacer />
              <BtnGroup>
                <GroupBtn $w={187}>Create new file</GroupBtn>
                <GroupBtn $w={158}>Upload files</GroupBtn>
                <GroupBtn $w={119}>Find file</GroupBtn>
              </BtnGroup>
              <CloneBtn>Clone or download<BtnCaret $c="#fff" /></CloneBtn>
            </Actions>

            <Files>
              <CommitBar>
                <Avatar>
                  <svg width="35" height="20" viewBox="0 0 35 20" fill="none" stroke="#2a86d6" strokeWidth="3.2"><path d="M17.5 10C14 4.5 11 3 8 3a7 7 0 0 0 0 14c3 0 6-1.5 9.5-7s6.5-7 9.5-7a7 7 0 0 1 0 14c-3 0-6-1.5-9.5-7z" /></svg>
                </Avatar>
                <span><Author>krnwbsn</Author> add images</span>
                <Latest>Latest commit <Sha>eeceb67</Sha> 28 days ago</Latest>
              </CommitBar>
              {files.map((f) => (
                <Row key={f.name} $hover={f.hover}>
                  <RowIcon><Oct w={f.dir ? 14 : 12} d={f.dir ? DIR : FILE} /></RowIcon>
                  <Name>{f.name}</Name>
                  <Message>{f.msg}</Message>
                  <span>{f.age}</span>
                </Row>
              ))}
            </Files>

            <Readme>
              <ReadmeHead><Oct w={16} d={BOOK} s={1.65} c="#24292e" />README.md</ReadmeHead>
              <Article>
                <H1>Content Management System</H1>
                <H3>Installation</H3>
                <Ul>
                  <li><Code>npm install</Code> to install dependencies</li>
                </Ul>
              </Article>
            </Readme>
          </Container>
        </Main>
        <Scroll><Up /><Thumb /><Down /></Scroll>
      </Viewport>
    </Page>
  );
}
